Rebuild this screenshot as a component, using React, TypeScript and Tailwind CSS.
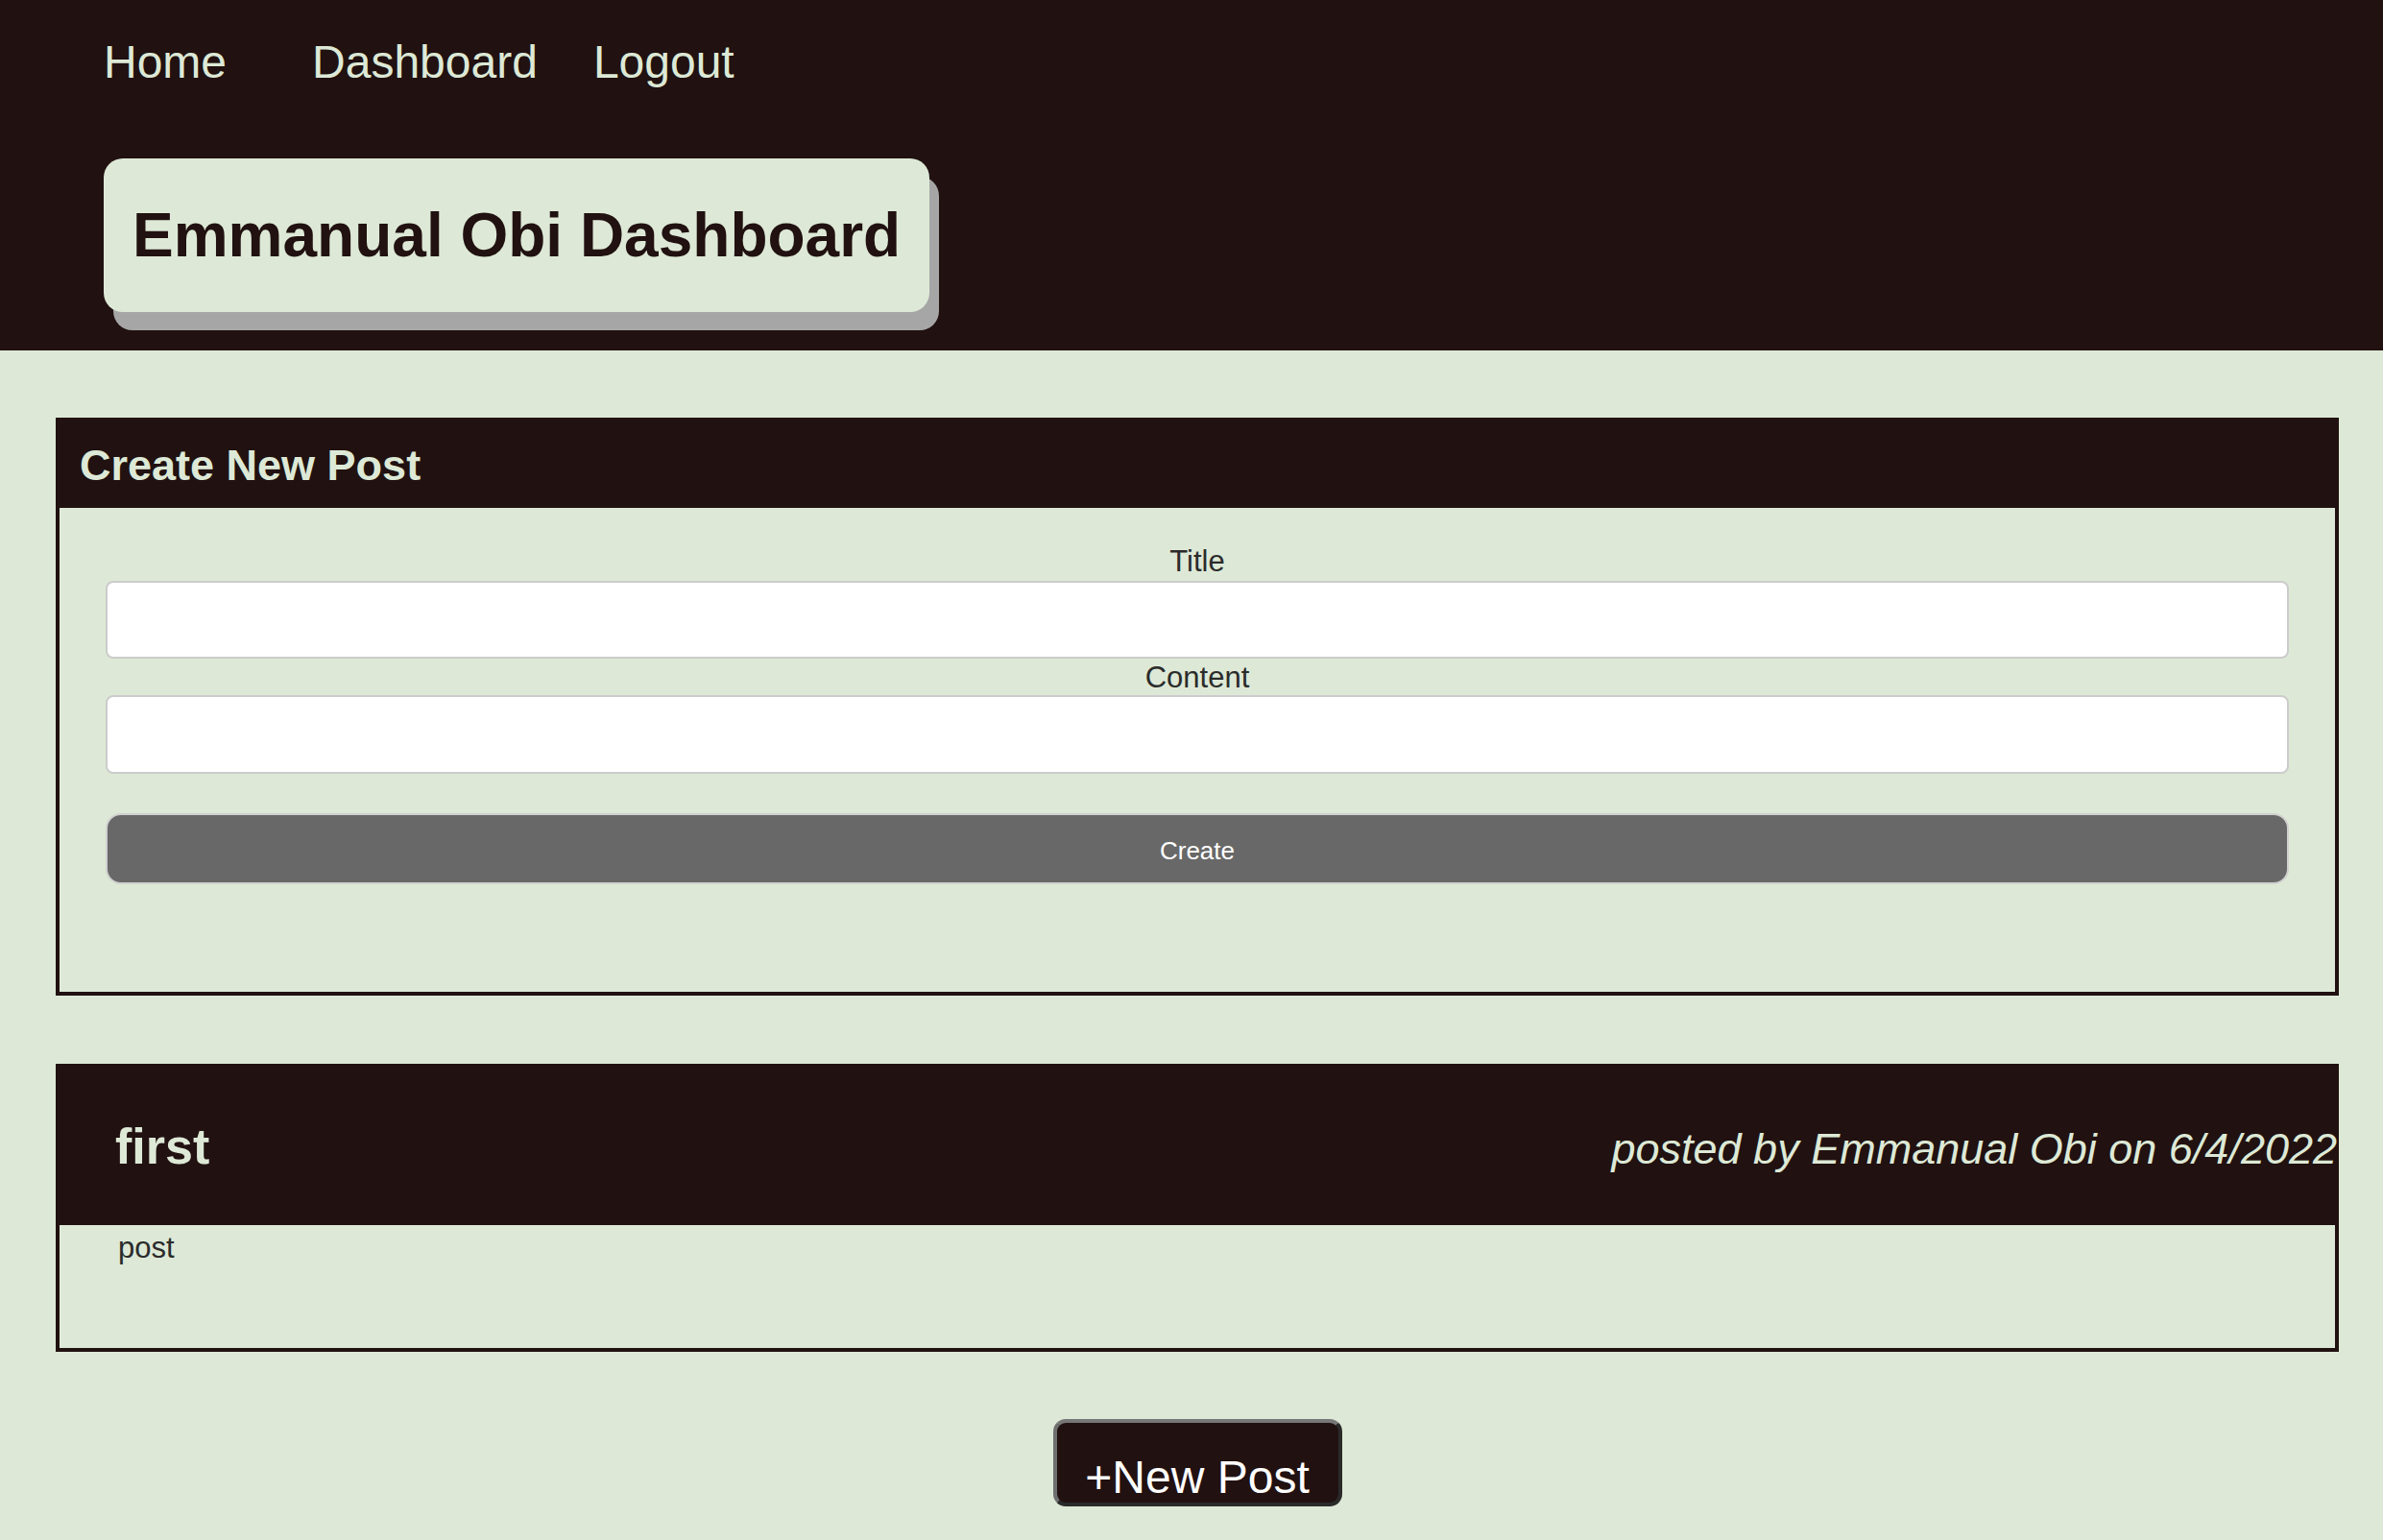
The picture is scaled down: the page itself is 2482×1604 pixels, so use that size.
export default function App() {
  return (
    <div className="min-h-screen bg-[#dde9d6] font-['Liberation_Sans',Arial,sans-serif]">
      <header className="h-[365px] bg-[#211111] pl-[108px] pt-[37px]">
        <nav className="flex text-[48px] leading-[56px] text-[#dde9d6]">
          <a href="#">Home</a>
          <a href="#" className="ml-[89px]">Dashboard</a>
          <a href="#" className="ml-[58px]">Logout</a>
        </nav>
        <div className="mt-[72px] flex h-[160px] w-[860px] items-center rounded-[20px] bg-[#dde9d6] px-[30px] shadow-[10px_19px_0_#a6a6a6]">
          <h1 className="whitespace-nowrap text-[64px] font-bold leading-[74px] text-[#211111]">Emmanual Obi Dashboard</h1>
        </div>
      </header>

      <main className="ml-[58px] mr-[46px] pt-[70px]">
        <section className="h-[602px] border-[4px] border-[#211111]">
          <div className="h-[90px] bg-[#211111] pl-[21px] pt-[20px]">
            <h2 className="text-[45px] font-bold leading-[52px] text-[#dde9d6]">Create New Post</h2>
          </div>
          <form className="flex flex-col px-[48px] pt-[38px]">
            <label className="text-center text-[31px] leading-[36px] text-[#2b2b2b]">Title</label>
            <input className="mt-[2px] h-[81px] rounded-[8px] border-2 border-[#cccccc] bg-white px-3 text-[28px]" />
            <label className="mt-[2px] text-center text-[31px] leading-[36px] text-[#2b2b2b]">Content</label>
            <input className="h-[82px] rounded-[8px] border-2 border-[#cccccc] bg-white px-3 text-[28px]" />
            <button
              type="button"
              className="mt-[41px] flex h-[74px] items-center justify-center rounded-[16px] border-2 border-[#d0d0d0] bg-[#686868] pt-[4px] text-[26px] leading-[30px] text-white"
            >
              Create
            </button>
          </form>
        </section>

        <article className="mt-[71px] h-[300px] border-[4px] border-[#211111]">
          <div className="flex h-[164px] items-center justify-between bg-[#211111] pl-[58px]">
            <h3 className="text-[52px] font-bold leading-[60px] text-[#dde9d6]">first</h3>
            <p className="mr-[-2px] pt-[4px] text-[45px] italic leading-[51px] text-[#dde9d6]">
              posted by Emmanual Obi on 6/4/2022
            </p>
          </div>
          <p className="pl-[61px] pt-[6px] text-[31px] leading-[36px] text-[#2b2b2b]">post</p>
        </article>

        <div className="mt-[70px] flex justify-center">
          <button
            type="button"
            className="h-[91px] w-[301px] rounded-[13px] border-[4px] border-t-[#777777] border-l-[#6f6f6f] border-r-[#2a2a2a] border-b-[#2a2a2a] bg-[#211111] pt-[29px] text-[48px] leading-[55px] text-white"
          >
            +New Post
          </button>
        </div>
      </main>
    </div>
  );
}
